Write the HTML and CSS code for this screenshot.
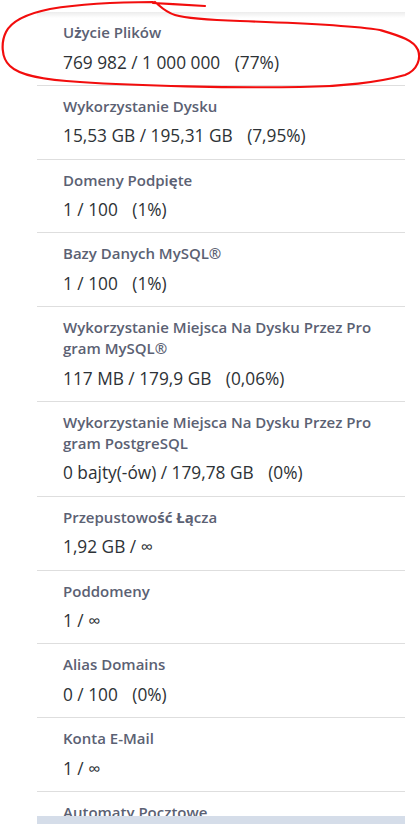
FILE: index.html
```html
<!DOCTYPE html>
<html lang="pl">
<head>
<meta charset="utf-8">
<title>Statystyki</title>
<link rel="stylesheet" href="styles.css">
</head>
<body>
<main class="stats">
  <div class="row"><div class="label">U<span class="x">ż</span>ycie Plików</div><div class="value">769 982 / 1 000 000 <span class="pct">(77%)</span></div></div>
  <div class="row"><div class="label">Wykorzystanie Dysku</div><div class="value">15,53 GB / 195,31 GB <span class="pct">(7,95%)</span></div></div>
  <div class="row"><div class="label">Domeny Podpi<span class="x">ę</span>te</div><div class="value">1 / 100 <span class="pct">(1%)</span></div></div>
  <div class="row"><div class="label">Bazy Danych MySQL®</div><div class="value">1 / 100 <span class="pct">(1%)</span></div></div>
  <div class="row"><div class="label">Wykorzystanie Miejsca Na Dysku Przez Program MySQL®</div><div class="value">117 MB / 179,9 GB <span class="pct">(0,06%)</span></div></div>
  <div class="row"><div class="label">Wykorzystanie Miejsca Na Dysku Przez Program PostgreSQL</div><div class="value">0 bajty(-ów) / 179,78 GB <span class="pct">(0%)</span></div></div>
  <div class="row"><div class="label">Przepustowo<span class="x">ść</span> <span class="x">Łą</span>cza</div><div class="value">1,92 GB / ∞</div></div>
  <div class="row"><div class="label">Poddomeny</div><div class="value">1 / ∞</div></div>
  <div class="row"><div class="label">Alias Domains</div><div class="value">0 / 100 <span class="pct">(0%)</span></div></div>
  <div class="row"><div class="label">Konta E-Mail</div><div class="value">1 / ∞</div></div>
  <div class="row"><div class="label">Automaty Pocztowe</div><div class="value">0 / ∞</div></div>
</main>
<div class="footer-bar"></div>
<svg class="annotation" width="420" height="100" viewBox="0 0 420 100" aria-hidden="true">
  <path d="M153,2 C120,2 80,4 50,9 C30,13 12,20 6,32 C1,42 1,58 10,66 C20,76 45,80 80,82 C140,86 230,88 300,87 C340,87 380,82 405,75 C418,70 421,58 418,50 C414,40 400,36 380,30 C350,25 300,23 240,21 C210,20 185,18 175,15 C165,12 160,6 155,2 M153,3 C170,4 190,5 205,6"/>
</svg>
</body>
</html>
```
FILE: styles.css
```css
html, body {
  margin: 0;
  padding: 0;
  background: #ffffff;
}

body {
  font-family: "Open Sans", "Liberation Sans", sans-serif;
  height: 824px;
  overflow: hidden;
  position: relative;
}

.stats {
  margin: 12px 15px 0 37px;
  background: linear-gradient(#ececec, #ffffff 6px) no-repeat;
}

.row {
  padding: 10px 30px 10.3px 26px;
  border-bottom: 1px solid #dedede;
}

.label {
  font-size: 15px;
  line-height: 21px;
  font-weight: 600;
  color: #5b6173;
  word-break: break-all;
}

.label .x {
  font-weight: 700;
}

.value {
  margin-top: 7.5px;
  font-size: 17.3px;
  line-height: 24px;
  color: #2d3236;
}

.pct {
  margin-left: 10px;
}

.footer-bar {
  position: absolute;
  left: 37px;
  bottom: 0;
  width: 368px;
  height: 8px;
  background: #d5dde9;
}

.annotation {
  position: absolute;
  left: 0;
  top: 0;
  pointer-events: none;
}

.annotation path {
  fill: none;
  stroke: #f20d0d;
  stroke-width: 2.2;
  stroke-linecap: round;
  stroke-linejoin: round;
}
```
